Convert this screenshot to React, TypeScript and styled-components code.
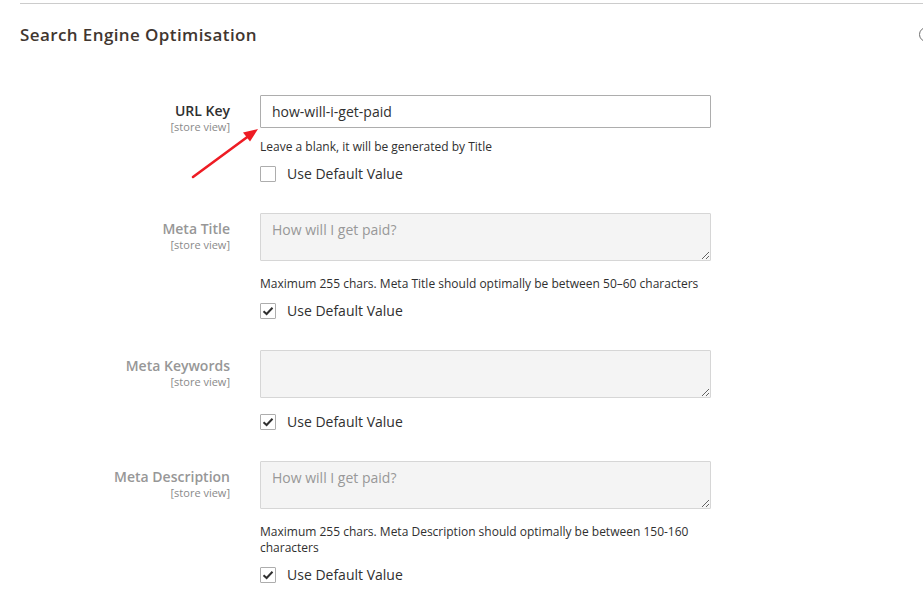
import { createGlobalStyle } from "styled-components";
import styled from "styled-components";

const GlobalStyle = createGlobalStyle`
  html, body {
    margin: 0;
    padding: 0;
    background: #fff;
    overflow-x: hidden;
  }
  body {
    font-family: "Open Sans", "Liberation Sans", sans-serif;
    color: #303030;
  }
`;

const Page = styled.div`
  position: relative;
  padding: 3px 0 0 20px;
  width: 923px;
  box-sizing: border-box;
  overflow: hidden;
`;

const Section = styled.section`
  border-top: 1px solid #cccccc;
`;

const SectionHeader = styled.div`
  display: flex;
  align-items: center;
  justify-content: space-between;
  padding: 20px 0 0;
  margin-right: -11px;
  height: 21px;
`;

const SectionTitle = styled.h2`
  margin: 0;
  font-size: 17px;
  line-height: 21px;
  font-weight: 600;
  color: #41362f;
  letter-spacing: 0.4px;
`;

const StateIcon = styled.span`
  display: block;
  flex: none;
  width: 15px;
  height: 15px;
  border: 1.5px solid #6f6f6f;
  border-radius: 50%;
  box-sizing: border-box;
`;

const Fields = styled.div`
  padding-top: 50px;
`;

const Field = styled.div`
  display: grid;
  grid-template-columns: 210px 451px;
  column-gap: 30px;
  margin-bottom: 31px;
`;

const LabelCol = styled.div<{ $disabled?: boolean }>`
  text-align: right;
  padding-top: 6px;
  color: ${(p) => (p.$disabled ? "#979797" : "#303030")};
`;

const LabelText = styled.label`
  display: block;
  font-size: 14px;
  line-height: 19px;
  font-weight: 600;
`;

const Scope = styled.span`
  display: block;
  font-size: 11px;
  line-height: 13px;
  color: #8a8a8a;
`;

const Control = styled.div`
  display: flex;
  flex-direction: column;
  align-items: flex-start;
`;

const TextInput = styled.input`
  box-sizing: border-box;
  width: 451px;
  height: 33px;
  margin: 0;
  padding: 0 11px;
  border: 1px solid #adadad;
  border-radius: 1px;
  background: #fff;
  font-family: inherit;
  font-size: 14px;
  color: #303030;
  outline: none;
`;

const TextArea = styled.textarea`
  display: block;
  box-sizing: border-box;
  width: 451px;
  height: 48px;
  margin: 0 0 4px;
  padding: 6px 11px;
  border: 1px solid #d6d6d6;
  border-radius: 1px;
  background: #f4f4f4;
  font-family: inherit;
  font-size: 14px;
  line-height: 19px;
  color: #989898;
  outline: none;
  resize: vertical;
`;

const Note = styled.div`
  margin-top: 11px;
  font-size: 12px;
  line-height: 16px;
  color: #303030;
  max-width: 451px;
`;

const CheckRow = styled.label<{ $gap: number }>`
  display: flex;
  align-items: center;
  gap: 11px;
  margin-top: ${(p) => p.$gap}px;
  font-size: 14px;
  line-height: 16px;
  color: #303030;
`;

const Box = styled.span`
  display: flex;
  align-items: center;
  justify-content: center;
  box-sizing: border-box;
  width: 16px;
  height: 16px;
  border: 1px solid #adadad;
  border-radius: 1px;
  background: #fff;
  color: #303030;
`;

const ArrowLayer = styled.svg`
  position: absolute;
  left: 0;
  top: 0;
  pointer-events: none;
`;

type FieldDef = {
  label: string;
  value: string;
  kind: "input" | "textarea";
  disabled?: boolean;
  note?: string;
  checked: boolean;
};

const FIELDS: FieldDef[] = [
  {
    label: "URL Key",
    value: "how-will-i-get-paid",
    kind: "input",
    note: "Leave a blank, it will be generated by Title",
    checked: false,
  },
  {
    label: "Meta Title",
    value: "How will I get paid?",
    kind: "textarea",
    disabled: true,
    note: "Maximum 255 chars. Meta Title should optimally be between 50–60 characters",
    checked: true,
  },
  {
    label: "Meta Keywords",
    value: "",
    kind: "textarea",
    disabled: true,
    checked: true,
  },
  {
    label: "Meta Description",
    value: "How will I get paid?",
    kind: "textarea",
    disabled: true,
    note: "Maximum 255 chars. Meta Description should optimally be between 150-160 characters",
    checked: true,
  },
];

const Checkbox = ({ checked, gap }: { checked: boolean; gap: number }) => (
  <CheckRow $gap={gap}>
    <Box>
      {checked && (
        <svg width="12" height="10" viewBox="0 0 12 10">
          <path
            d="M1.5 5.2 L4.6 8 L10.5 1.8"
            fill="none"
            stroke="currentColor"
            strokeWidth="2"
          />
        </svg>
      )}
    </Box>
    <span>Use Default Value</span>
  </CheckRow>
);

const FormField = ({ field }: { field: FieldDef }) => {
  return (
    <Field>
      <LabelCol $disabled={field.disabled}>
        <LabelText>{field.label}</LabelText>
        <Scope>[store view]</Scope>
      </LabelCol>
      <Control>
        {field.kind === "input" ? (
          <TextInput defaultValue={field.value} />
        ) : (
          <TextArea readOnly value={field.value} />
        )}
        {field.note && <Note>{field.note}</Note>}
        <Checkbox checked={field.checked} gap={field.note ? 11 : 12} />
      </Control>
    </Field>
  );
};

export default function App() {
  return (
    <>
      <GlobalStyle />
      <Page>
        <Section>
          <SectionHeader>
            <SectionTitle>Search Engine Optimisation</SectionTitle>
            <StateIcon />
          </SectionHeader>
          <Fields>
            {FIELDS.map((f) => (
              <FormField key={f.label} field={f} />
            ))}
          </Fields>
        </Section>
        <ArrowLayer width="923" height="600">
          <line
            x1="193"
            y1="177"
            x2="248"
            y2="136.5"
            stroke="#ee1c24"
            strokeWidth="2.6"
            strokeLinecap="round"
          />
          <polygon points="258,129 250,141.5 243,132.5" fill="#ee1c24" />
        </ArrowLayer>
      </Page>
    </>
  );
}
